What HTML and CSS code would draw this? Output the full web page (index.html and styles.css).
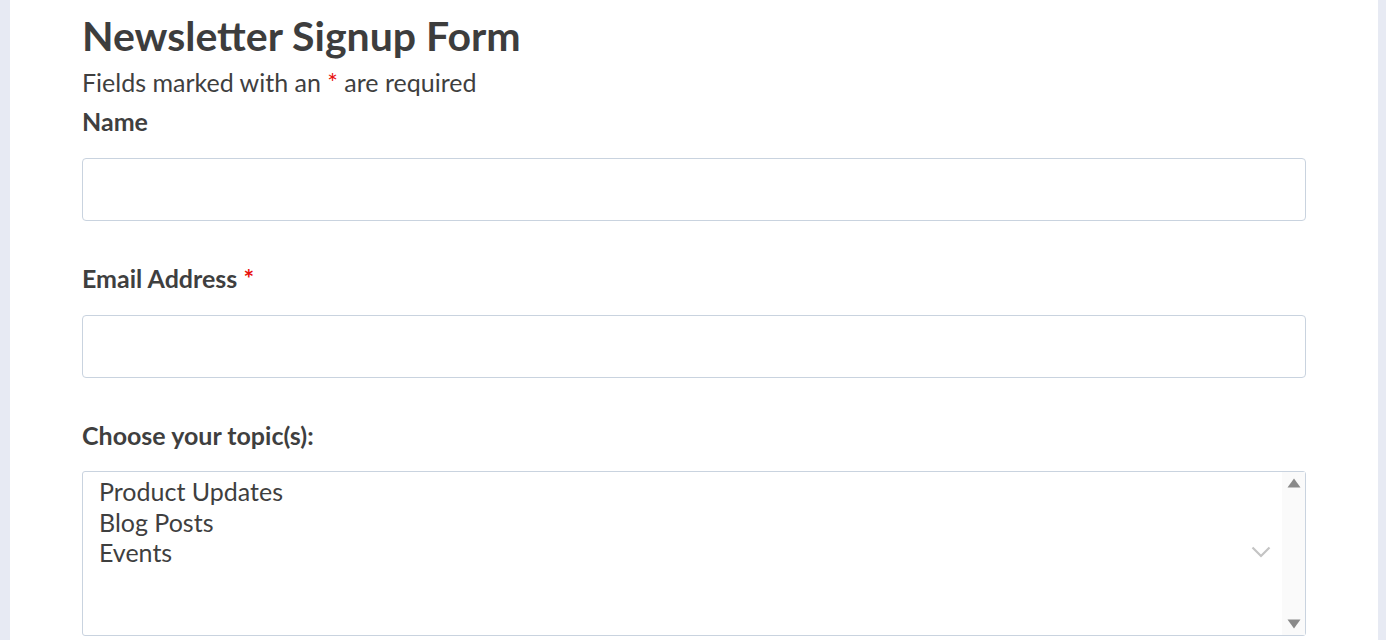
FILE: index.html
```html
<!DOCTYPE html>
<html lang="en">
<head>
<meta charset="utf-8">
<title>Newsletter Signup Form</title>
<link rel="stylesheet" href="styles.css">
</head>
<body>
<main class="page">
  <form class="form">
    <h1 class="title">Newsletter Signup Form</h1>
    <p class="note">Fields marked with an <span class="req">*</span> are required</p>

    <div class="field">
      <label class="label" for="name">Name</label>
      <input class="input" id="name" type="text">
    </div>

    <div class="field">
      <label class="label" for="email">Email Address <span class="req">*</span></label>
      <input class="input" id="email" type="email">
    </div>

    <div class="field field-topics">
      <label class="label">Choose your topic(s):</label>
      <div class="listbox">
        <ul class="options">
          <li class="option">Product Updates</li>
          <li class="option">Blog Posts</li>
          <li class="option">Events</li>
        </ul>
        <svg class="chevron" width="20" height="12" viewBox="0 0 20 12" aria-hidden="true">
          <path d="M1.5 1.5 L10 10 L18.5 1.5" fill="none" stroke="#c4c4c4" stroke-width="2.2"/>
        </svg>
        <div class="scrollbar">
          <svg class="arrow" width="14" height="10" viewBox="0 0 14 10"><path d="M7 0.5 L13.5 9.5 L0.5 9.5 Z" fill="#8a8a8a"/></svg>
          <svg class="arrow" width="14" height="10" viewBox="0 0 14 10"><path d="M0.5 0.5 L13.5 0.5 L7 9.5 Z" fill="#8a8a8a"/></svg>
        </div>
      </div>
    </div>
  </form>
</main>
</body>
</html>
```

FILE: styles.css
```css
html, body {
  margin: 0;
  padding: 0;
}
body {
  background: #e7eaf3;
  font-family: Lato, "Noto Sans", sans-serif;
  color: #3f3f3f;
  height: 640px;
  overflow: hidden;
}
.page {
  margin-left: 10px;
  width: 1368px;
  min-height: 640px;
  background: #ffffff;
  box-sizing: border-box;
  padding: 0 72px;
}
.form {
  display: flex;
  flex-direction: column;
}
.title {
  margin: 0;
  padding-top: 12px;
  font-size: 41px;
  line-height: 48px;
  font-weight: 700;
  color: #3d3d3d;
}
.note {
  margin: 7px 0 0;
  font-size: 25px;
  line-height: 30px;
}
.req {
  color: #e8100c;
}
.field {
  display: flex;
  flex-direction: column;
}
.label {
  font-size: 25px;
  font-weight: 700;
  line-height: 30px;
  margin-top: 9px;
  margin-bottom: 22px;
}
.field + .field .label {
  margin-top: 42px;
}
.field-topics .label {
  margin-bottom: 21px;
}
.input {
  box-sizing: border-box;
  width: 1224px;
  height: 63px;
  border: 1px solid #c9d3df;
  border-radius: 4px;
  background: #fff;
  margin: 0;
}
.listbox {
  box-sizing: border-box;
  width: 1224px;
  height: 165px;
  border: 1px solid #c9d3df;
  border-radius: 3px;
  display: flex;
  background: #fff;
}
.options {
  list-style: none;
  margin: 0;
  padding: 4px 16px;
  flex: 1;
}
.option {
  font-size: 25px;
  line-height: 30.5px;
  color: #3f3f3f;
}
.chevron {
  align-self: center;
  margin-right: 11px;
  margin-top: -4px;
}
.scrollbar {
  width: 23px;
  background: #fafafa;
  display: flex;
  flex-direction: column;
  justify-content: space-between;
  align-items: center;
  padding: 6px 0 6px;
  box-sizing: border-box;
}
```
